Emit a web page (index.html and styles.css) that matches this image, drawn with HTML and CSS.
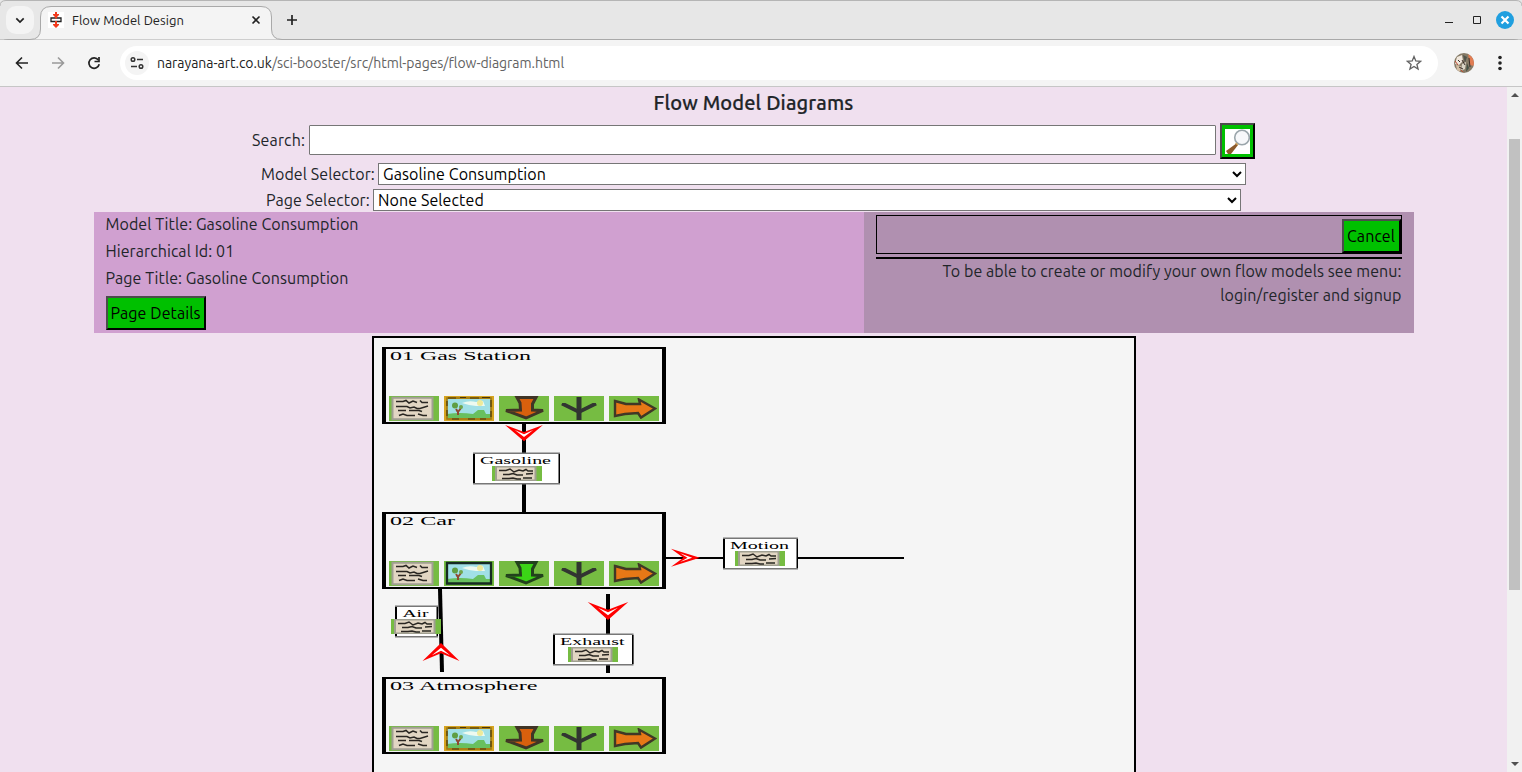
FILE: index.html
```html
<!DOCTYPE html>
<html lang="en">
<head>
<meta charset="utf-8">
<title>Flow Model Design</title>
<link rel="stylesheet" href="styles.css">
</head>
<body>
<div class="browser">
  <header class="tabstrip">
    <svg class="tab-shape" width="1522" height="40" viewBox="0 0 1522 40" fill="none">
      <path d="M0 40V47Q0 39.500 8 39.500H30Q40.500 39.500 40.500 29V17Q40.500 6.500 51 6.500H261Q271.500 6.500 271.500 17V29Q271.500 39.500 282 39.500H1514Q1522 39.500 1522 47V40Z" fill="#f4f4f4" stroke="#a9a9a9"/>
      <path d="M0 6Q0 .5 6 .5H1516Q1522 .5 1522 6" stroke="#b5b5b5"/>
    </svg>
    <div class="tab-search"><svg width="28" height="28" viewBox="0 0 28 28"><path d="M10.300 12.300L14 16L17.700 12.300" fill="none" stroke="#222" stroke-width="1.700"/></svg></div>
    <div class="tab">
      <svg width="16" height="16" viewBox="0 0 16 16"><path d="M0 0H16V16H0Z" fill="#fff"/><path d="M3 6H13V9.500H3Z" fill="#fff" stroke="#222" stroke-width="1.300"/><path d="M7 0H9V2H11V3L8 6L5 3V2H7ZM7 10H9V12H11V13L8 16L5 13V12H7Z" fill="#f23a1c"/><path d="M8 3.500V6.500M8 9V12" stroke="#f23a1c" stroke-width="2"/></svg>
      <span class="tab-title">Flow Model Design</span>
      <svg class="tab-close" width="10" height="10" viewBox="0 0 10 10"><path d="M1.500 1.500L8.500 8.500M8.500 1.500L1.500 8.500" stroke="#222" stroke-width="1.600"/></svg>
    </div>
    <svg class="new-tab" width="12" height="12" viewBox="0 0 12 12"><path d="M6 1V11M1 6H11" stroke="#222" stroke-width="1.700"/></svg>
    <div class="window-buttons">
      <svg width="80" height="20" viewBox="0 0 80 20"><path d="M5 12.500H13" stroke="#222"/><path d="M33.500 6.500H40.500V13.500H33.500Z" fill="none" stroke="#222"/><circle cx="65" cy="10" r="9" fill="#209fdf"/><path d="M61.500 6.500L68.500 13.500M68.500 6.500L61.500 13.500" stroke="#fff" stroke-width="2.200"/></svg>
    </div>
  </header>
  <div class="toolbar">
    <svg class="nav-icons" width="88" height="16" viewBox="0 0 88 16" fill="none" stroke-width="1.600"><path d="M14 8H2.500M8 2.500L2.500 8L8 13.500" stroke="#222"/><path d="M38 8H49.500M44 2.500L49.500 8L44 13.500" stroke="#999"/><path d="M84.300 5A5.200 5.200 0 1 0 85.200 9.300" stroke="#222" stroke-width="1.700"/><path d="M85 2V6.500H80.500" stroke="#222" stroke-width="1.700"/></svg>
    <div class="address">
      <div class="site-info"><svg width="24" height="24" viewBox="0 0 24 24" fill="none" stroke="#333" stroke-width="1.500"><circle cx="8" cy="8.500" r="1.800"/><path d="M12 8.500H18M6 15.500H12"/><circle cx="16" cy="15.500" r="1.800"/></svg></div>
      <span class="url"><b>narayana-art.co.uk</b>/sci-booster/src/html-pages/flow-diagram.html</span>
      <svg class="star" width="16" height="16" viewBox="0 0 16 16"><path d="M8 1.500L9.800 6L14.600 6.300L10.900 9.400L12.100 14.100L8 11.500L3.900 14.100L5.100 9.400L1.400 6.300L6.200 6Z" fill="none" stroke="#626262" stroke-width="1.300"/></svg>
    </div>
    <svg class="avatar" width="20" height="20" viewBox="0 0 20 20"><defs><clipPath id="round"><circle cx="10" cy="10" r="10"/></clipPath></defs><g clip-path="url(#round)"><path d="M0 0H20V20H0Z" fill="#857a66"/><path d="M14 1L20 5V13L16 12Z" fill="#e17c52"/><path d="M3 4L8 2L9 8L5 12L1 11Z" fill="#f0e7dc"/><path d="M2 12L7 13L6 19L3 17Z" fill="#d3bea4"/><path d="M9 2L13 4L11 10Z" fill="#50544b"/><path d="M8 11L12 9L11 16L7 18Z" fill="#d9d4c5"/><path d="M13 10L15 15L12 19Z" fill="#445246"/><path d="M4 7L6 9M8 7L11 12M15 5L16 14M5 14L9 16" stroke="#3a2e28"/><path d="M1 8L4 12M7 17L9 19" stroke="#bd4930"/></g></svg>
    <svg class="menu-dots" width="4" height="16" viewBox="0 0 4 16" fill="#222"><circle cx="2" cy="2.500" r="1.800"/><circle cx="2" cy="8" r="1.800"/><circle cx="2" cy="13.500" r="1.800"/></svg>
  </div>
  <div class="viewport">
    <main class="page">
      <h1 class="heading">Flow Model Diagrams</h1>
      <div class="search-row">
        <label class="label search-label">Search:</label><input class="search-input" type="text">
        <button class="button search-button"><svg width="25" height="25" viewBox="0 0 25 25"><path d="M0 0H25V25H0Z" fill="#fff"/><path d="M12 14L1 22L3 25H6L13 16Z" fill="#8b5a2b"/><circle cx="17" cy="8.500" r="7.300" fill="#f7f8fa" stroke="#9ba6ab" stroke-width="1.600"/><path d="M10.500 14L13 16" stroke="#d1a65e" stroke-width="1.500"/></svg></button>
      </div>
      <div class="select-row"><label class="label model-label">Model Selector:</label><select class="select"><option>Gasoline Consumption</option></select></div>
      <div class="select-row"><label class="label page-label">Page Selector:</label><select class="select"><option>None Selected</option></select></div>
      <section class="panels">
        <div class="details">
          <p class="detail">Model Title: Gasoline Consumption</p>
          <p class="detail">Hierarchical Id: 01</p>
          <p class="detail">Page Title: Gasoline Consumption</p>
          <button class="button details-button">Page Details</button>
        </div>
        <div class="actions">
          <div class="action-box"><button class="button cancel-button">Cancel</button></div>
          <div class="rule"></div>
          <p class="notice">To be able to create or modify your own flow models see menu:<br>login/register and signup</p>
        </div>
      </section>
      <svg class="diagram" width="764" height="440" viewBox="372 336 764 440">
        <defs>
          <filter id="soft" x="-5%" y="-5%" width="110%" height="110%"><feGaussianBlur stdDeviation=".5"/></filter>
          <symbol id="note" viewBox="0 0 50 25"><path d="M0 0H50V25H0Z" fill="#76bc42"/><g filter="url(#soft)"><path d="M3.500 1.700H43.500V23.300H3.500Z" fill="#e2d6c3" stroke="#a09f91" stroke-width="2"/><path d="M7 5.500H14L17 4.500L20 7L24 5L28 6.500M31 4.500L33 6.500H39M7 10.500H18L21 12L25 11L28 12.500H31L39 10M9 14.500H17M20 14.500H30L33 15.500M10 19.500L14 18L18 19.500H26M29 18L34 19.500H38" fill="none" stroke="#292823" stroke-width="1.600"/></g></symbol>
          <symbol id="smallnote" viewBox="0 0 50 15"><path d="M0 0H50V15H0Z" fill="#76bc42"/><g filter="url(#soft)"><path d="M4 .5H43.500V14.500H4Z" fill="#e2d6c3" stroke="#a09f91" stroke-width="2"/><path d="M7 4.500H14L18 3L22 6L27 4L31 5L34 3.500L36 5H41M11 8.500H17L21 7.500L25 9H31M34 8L41 7.500M10 12.500H17L21 12L25 13H29M31 12H40" fill="none" stroke="#292823" stroke-width="1.500"/></g></symbol>
          <g id="scene"><path d="M3 3H47V22H3Z" fill="#a1e0e6"/><path d="M18 7Q25 4 32 6L39 5L41 10L32 10L25 9Z" fill="#eefaf0"/><circle cx="36" cy="7" r="3" fill="#eeea9b"/><path d="M3 18Q16 16 29 18L34 14L40 14L42 18H47V22H3Z" fill="#68c05f"/><path d="M12 13L14 16V19M17 12L14 16" stroke="#914930" stroke-width="2"/><circle cx="11" cy="9.500" r="3" fill="#5e9e43"/><circle cx="17" cy="11" r="2" fill="#70a54c"/></g>
          <symbol id="picture" viewBox="0 0 50 25"><path d="M0 0H50V25H0Z" fill="#d6a420"/><g filter="url(#soft)"><use href="#scene"/><path d="M3 2H47V23H3Z" fill="none" stroke="#9b7614" stroke-width="1.600"/><path d="M4 2H12M16 1.500H22M26 2H35M38 1.500H46M3 5V10M3 14V20M47 4V11M47 15V21M8 23H15M24 23H31M36 23H42" stroke="#463610" stroke-width="1.100"/></g></symbol>
          <symbol id="picture-dark" viewBox="0 0 50 25"><path d="M0 0H50V25H0Z" fill="#76bc42"/><g filter="url(#soft)"><use href="#scene"/><path d="M3 2H47V22.500H3Z" fill="none" stroke="#162a20" stroke-width="2.300"/></g></symbol>
          <path id="down-path" d="M18 1.500H37L33.500 8V14L44 14.500L27 22L7 14.500L21.500 14L21 7Z"/>
          <symbol id="down" viewBox="0 0 50 25"><path d="M0 0H50V25H0Z" fill="#76bc42"/><use href="#down-path" fill="#d9600e" stroke="#403426" stroke-width="3" filter="url(#soft)"/></symbol>
          <symbol id="down-green" viewBox="0 0 50 25"><path d="M0 0H50V25H0Z" fill="#76bc42"/><use href="#down-path" fill="#3bd514" stroke="#24431c" stroke-width="3" filter="url(#soft)"/></symbol>
          <symbol id="branch" viewBox="0 0 50 25"><path d="M0 0H50V25H0Z" fill="#76bc42"/><path d="M25 1V24" stroke="#303630" stroke-width="5"/><path d="M8 7.500L25 16L42 7.500" fill="none" stroke="#303630" stroke-width="3.700" filter="url(#soft)"/></symbol>
          <symbol id="right" viewBox="0 0 50 25"><path d="M0 0H50V25H0Z" fill="#76bc42"/><path d="M6 5L17 8H31L30 3.500L46 12.500L32 21.500L29 17L16 18L6 20Z" fill="#e77813" stroke="#3f3727" stroke-width="2.400" filter="url(#soft)"/></symbol>
          <g id="node"><path d="M0 0H284V77H0Z"/><path d="M4 2H280V75H4Z" fill="#f5f5f5"/><use href="#note" x="7" y="49" width="50" height="25"/><use href="#branch" x="172" y="49" width="50" height="25"/><use href="#right" x="227" y="49" width="50" height="25"/></g>
          <g id="arrow"><path d="M-19.500 0L0 7.500L19.500 0L0 17.500Z" fill="red"/><path d="M-9.500 5.500L0 10L9.500 5.500L0 12.800Z" fill="#fff"/></g>
        </defs>
        <path d="M522 424H526V512H522ZM666 557H904V559H666ZM606 594H610V673H606Z"/>
        <path d="M440 589L442 672" stroke="#000" stroke-width="4"/>
        <use href="#node" x="382" y="347"/><use href="#picture" x="444" y="396" width="50" height="25"/><use href="#down" x="499" y="396" width="50" height="25"/>
        <use href="#node" x="382" y="512"/><use href="#picture-dark" x="444" y="561" width="50" height="25"/><use href="#down-green" x="499" y="561" width="50" height="25"/>
        <use href="#node" x="382" y="677"/><use href="#picture" x="444" y="726" width="50" height="25"/><use href="#down" x="499" y="726" width="50" height="25"/>
        <g class="node-text"><text x="390" y="360" textLength="141" lengthAdjust="spacingAndGlyphs">01 Gas Station</text><text x="390" y="525" textLength="65" lengthAdjust="spacingAndGlyphs">02 Car</text><text x="390" y="690" textLength="147.500" lengthAdjust="spacingAndGlyphs">03 Atmosphere</text></g>
        <use href="#arrow" transform="translate(524 425) scale(.97 .93)"/>
        <use href="#arrow" transform="translate(608 602) scale(1.040 1.030)"/>
        <use href="#arrow" transform="translate(441 661) scale(.95 -1.030)"/>
        <use href="#arrow" transform="translate(671 557.700) rotate(-90) scale(.46 1.650)"/>
        <g class="flow-box"><path d="M473 452.500H560V484.500H473ZM395 605.500H438V637.500H395ZM553 633.500H633.500V665.500H553ZM723 537.500H798V569.500H723Z" fill="#777"/><path d="M473 454H560V483H473ZM395 607H438V636H395ZM553 635H633.500V664H553ZM723 539H798V568H723Z"/><path d="M475 454H558.500V483H475ZM397 607H436.500V636H397ZM555 635H632V664H555ZM725 539H796.500V568H725Z" fill="#fff"/></g>
        <use href="#smallnote" x="492" y="466" width="50" height="15"/><use href="#smallnote" x="391" y="619" width="50" height="15"/><use href="#smallnote" x="568" y="647" width="50" height="15"/><use href="#smallnote" x="735" y="551" width="50" height="15"/>
        <g class="flow-text"><text x="480" y="464" textLength="71" lengthAdjust="spacingAndGlyphs">Gasoline</text><text x="402.500" y="617" textLength="26" lengthAdjust="spacingAndGlyphs">Air</text><text x="560" y="645" textLength="64.500" lengthAdjust="spacingAndGlyphs">Exhaust</text><text x="730" y="549" textLength="59" lengthAdjust="spacingAndGlyphs">Motion</text></g>
      </svg>
    </main>
    <aside class="scrollbar"><span class="up"></span><span class="thumb"></span><span class="down"></span></aside>
  </div>
</div>
</body>
</html>
```
FILE: styles.css
```css
* { box-sizing: border-box; }
body { margin: 0; overflow: hidden; font-family: Ubuntu, "Noto Sans", sans-serif; font-size: 16px; letter-spacing: .08px; color: #212529; }
.browser { width: 1522px; height: 772px; display: flex; flex-direction: column; }
.tabstrip { height: 40px; background: #e7e7e7; display: flex; align-items: center; position: relative; flex: none; }
.tab-shape { position: absolute; left: 0; top: 0; }
.tab-search { width: 28px; height: 28px; margin-left: 6px; border-radius: 10px; background: #f4f4f4; position: relative; }
.tab { position: relative; width: 231px; margin-left: 6px; padding-left: 8px; display: flex; align-items: center; gap: 8px; }
.tab-title { font-size: 13px; letter-spacing: .06px; color: #222; }
.tab-close { margin-left: auto; margin-right: 10px; }
.new-tab { position: relative; margin-left: 15px; }
.window-buttons { position: relative; margin-left: auto; margin-right: 2px; height: 20px; }
.toolbar { height: 47px; flex: none; background: #f4f4f4; border-bottom: 1px solid #c6c6c6; display: flex; align-items: center; padding-left: 14px; }
.address { width: 1318px; height: 34px; margin-left: 18px; border-radius: 17px; background: #fff; display: flex; align-items: center; padding: 0 16px 0 5px; }
.site-info { width: 24px; height: 24px; border-radius: 12px; background: #f4f4f4; }
.url { margin-left: 8px; font-size: 14px; letter-spacing: -.04px; color: #626262; }
.url b { font-weight: 400; color: #222; }
.star { margin-left: auto; }
.avatar { margin-left: 16px; }
.menu-dots { margin-left: 24px; }
.viewport { flex: 1; display: flex; min-height: 0; }
.page { width: 1507px; background: #f0e0ef; overflow: hidden; display: flex; flex-direction: column; align-items: center; }
.heading { margin: 4px 0 8px; height: 24px; flex: none; line-height: 24px; font-size: 20px; font-weight: 500; letter-spacing: .13px; -webkit-text-stroke: .2px #212529; }
.search-row { height: 36px; flex: none; width: 1003px; display: flex; align-items: center; }
.label { white-space: nowrap; flex: none; }
.search-label { width: 57px; margin-bottom: 2px; letter-spacing: .15px; }
.search-input { width: 907px; height: 30px; margin: 0 4px 2px 0; border: 1px solid #767676; border-radius: 1px; background: #fff; }
.button { flex: none; background: #00c000; color: #000; border: 2px solid #000; border-top-color: #4c4c4c; border-left-color: #4c4c4c; font: inherit; letter-spacing: .08px; padding: 0; display: flex; align-items: center; justify-content: center; white-space: nowrap; }
.search-button { width: 35px; height: 36px; }
.select-row { display: flex; flex: none; align-items: center; height: 22px; margin-top: 4px; }
.model-label { width: 117px; }
.page-label { width: 107px; }
.select { width: 868px; height: 22px; font: inherit; letter-spacing: .1px; line-height: 20px; color: #000; background: #fff; border: 1px solid #767676; padding: 0; }
.panels { display: flex; flex: none; width: 1320px; height: 121px; margin: 1px 0 3px; }
.details { width: 770px; background: #d0a0d0; padding-left: 12px; }
.detail { margin: 0 0 3px; height: 24px; line-height: 24px; width: max-content; }
.details-button { width: 100px; height: 34px; margin-top: 6px; }
.actions { width: 550px; background: #b090b0; padding: 3px 12px 0; }
.action-box { height: 39px; border: 1px solid #000; display: flex; justify-content: flex-end; align-items: flex-end; }
.cancel-button { width: 59px; height: 34px; }
.rule { height: 2px; margin-top: 3px; background: #000; }
.notice { margin: 0; line-height: 24px; text-align: right; letter-spacing: .07px; }
.diagram { flex: none; background: #f5f5f5; outline: 2px solid #000; outline-offset: -2px; }
.node-text { font: 12px "Liberation Serif", serif; letter-spacing: 0; }
.flow-text { font: 11px "Liberation Serif", serif; letter-spacing: 0; }
.scrollbar { width: 15px; background: #f1f1f1; display: flex; flex-direction: column; align-items: center; }
.up { margin-top: 6px; border: 4px solid transparent; border-top: 0; border-bottom-color: #505050; }
.thumb { width: 11px; height: 451px; margin-top: 42px; background: #c1c1c1; }
.down { margin: auto 0 6px; border: 4px solid transparent; border-bottom: 0; border-top-color: #505050; }
```
